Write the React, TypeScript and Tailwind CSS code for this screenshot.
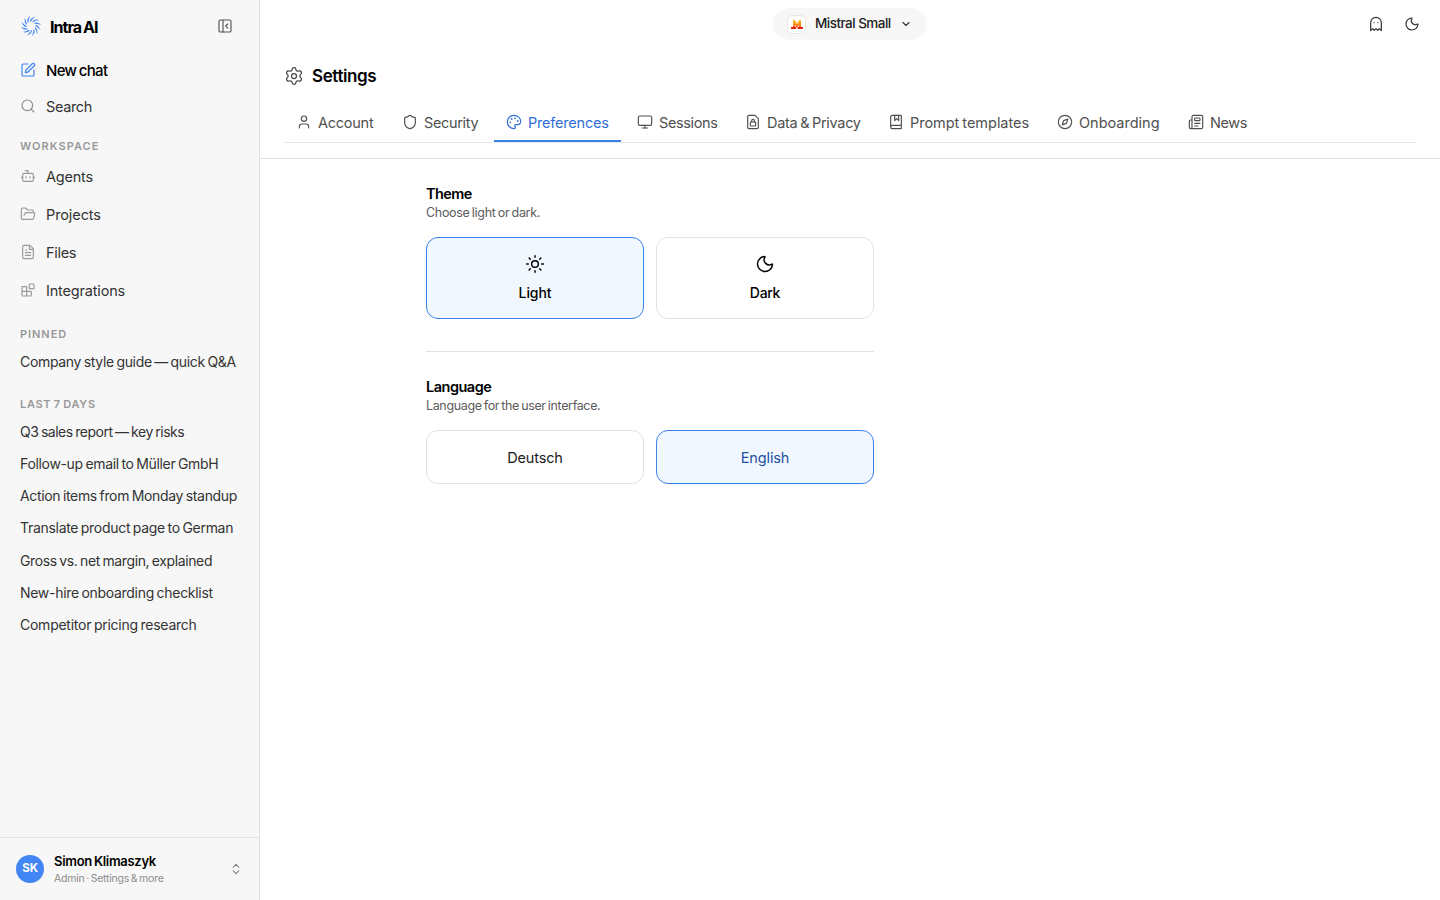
import type { ReactNode } from 'react';
import clsx from 'clsx';
import {
  BookMarked,
  Bot,
  ChevronDown,
  ChevronsUpDown,
  Compass,
  FileText,
  FolderOpen,
  Ghost,
  Monitor,
  Moon,
  Newspaper,
  Palette,
  PanelLeftClose,
  Search,
  Settings,
  Shield,
  SquarePen,
  Sun,
  User,
  type LucideIcon,
} from 'lucide-react';

type IconProps = { className?: string };

function BlocksIcon({ className }: IconProps) {
  return (
    <svg
      width="16"
      height="16"
      viewBox="0 0 24 24"
      fill="none"
      stroke="currentColor"
      strokeWidth="1.75"
      strokeLinecap="round"
      strokeLinejoin="round"
      className={className}
    >
      <rect width="7" height="7" x="14" y="3" rx="1" />
      <path d="M10 21V8a1 1 0 0 0-1-1H4a1 1 0 0 0-1 1v12a1 1 0 0 0 1 1h12a1 1 0 0 0 1-1v-5a1 1 0 0 0-1-1H3" />
    </svg>
  );
}

function FileLockIcon({ className }: IconProps) {
  return (
    <svg
      width="16"
      height="16"
      viewBox="0 0 24 24"
      fill="none"
      stroke="currentColor"
      strokeWidth="1.75"
      strokeLinecap="round"
      strokeLinejoin="round"
      className={className}
    >
      <path d="M15 2H6a2 2 0 0 0-2 2v16a2 2 0 0 0 2 2h12a2 2 0 0 0 2-2V7Z" />
      <rect width="8" height="6" x="8" y="12" rx="1" />
      <path d="M10 12v-2a2 2 0 1 1 4 0v2" />
    </svg>
  );
}

const WORKSPACE: { label: string; icon: LucideIcon | typeof BlocksIcon; className: string }[] = [
  { label: 'Agents', icon: Bot, className: 'tracking-[-0.2px]' },
  { label: 'Projects', icon: FolderOpen, className: 'tracking-[-0.1px]' },
  { label: 'Files', icon: FileText, className: 'tracking-[-0.3px]' },
  { label: 'Integrations', icon: BlocksIcon, className: 'tracking-[-0.18px]' },
];

const RECENT = [
  { label: 'Q3 sales report — key risks', className: 'tracking-[-0.47px]' },
  { label: 'Follow-up email to Müller GmbH', className: 'tracking-[-0.33px]' },
  { label: 'Action items from Monday standup', className: 'tracking-[-0.33px]' },
  { label: 'Translate product page to German', className: 'tracking-[-0.3px]' },
  { label: 'Gross vs. net margin, explained', className: 'tracking-[-0.38px]' },
  { label: 'New-hire onboarding checklist', className: 'tracking-[-0.3px]' },
  { label: 'Competitor pricing research', className: 'tracking-[-0.25px]' },
];

const TABS: { label: string; icon: LucideIcon | typeof FileLockIcon; className: string }[] = [
  { label: 'Account', icon: User, className: 'w-[102px] tracking-[-0.25px]' },
  { label: 'Security', icon: Shield, className: 'w-[100px] tracking-[-0.35px]' },
  { label: 'Preferences', icon: Palette, className: 'w-[127px] tracking-[-0.2px]' },
  { label: 'Sessions', icon: Monitor, className: 'w-[104px] tracking-[-0.38px]' },
  { label: 'Data & Privacy', icon: FileLockIcon, className: 'w-[139px] tracking-[-0.3px]' },
  { label: 'Prompt templates', icon: BookMarked, className: 'w-[165px] tracking-[-0.03px]' },
  { label: 'Onboarding', icon: Compass, className: 'w-[127px]' },
  { label: 'News', icon: Newspaper, className: 'w-[83px] tracking-[-0.4px]' },
];

const RAYS = Array.from({ length: 12 }, (_, i) => i * 30);

function Logo() {
  return (
    <svg width="20" height="20" viewBox="0 0 20 20" fill="none" stroke="#4285f4" strokeLinecap="round">
      {RAYS.map((deg) => (
        <g key={deg} transform={`rotate(${deg} 10 10)`}>
          <path d="M9.6 5.1C9.9 4 10.6 3 11.6 2.4" strokeWidth="1.25" />
          <path d="M12.6 1.6l.5-.3" strokeWidth="1" />
        </g>
      ))}
    </svg>
  );
}

function MistralLogo() {
  return (
    <svg width="12" height="9" viewBox="0 0 12 9">
      <path d="M2 0h2.2v2H2zM7.8 0H10v2H7.8z" fill="#ffb81c" />
      <path d="M2 1.8h3.4v2H2zM6.6 1.8H10v2H6.6z" fill="#ffa012" />
      <path d="M2 3.6h8v1.9H2z" fill="#ff8205" />
      <path d="M2 5.4h2.2v1.8H2zM5 5.4h2v1.8H5zM7.8 5.4H10v1.8H7.8z" fill="#fa500f" />
      <path d="M0 7.1h5.2V9H0zM6.8 7.1H12V9H6.8z" fill="#e3260b" />
    </svg>
  );
}

function SectionLabel({ children, className }: { children: ReactNode; className?: string }) {
  return (
    <div className={clsx('px-5 text-[11px] leading-4 font-semibold text-[#999]', className)}>
      {children}
    </div>
  );
}

function Sidebar() {
  return (
    <aside className="flex w-[260px] shrink-0 flex-col border-r border-[#e2e2e2] bg-[#f7f7f7]">
      <div className="flex h-[52px] items-center pr-[26px] pl-[21px]">
        <Logo />
        <span className="ml-[9px] pt-px text-base font-bold tracking-[-0.95px] text-black">Intra AI</span>
        <PanelLeftClose size={16} strokeWidth={1.75} className="ml-auto text-[#555]" />
      </div>

      <nav className="flex flex-col">
        <a className="flex h-9 items-center gap-2.5 px-5 text-[15px] font-medium tracking-[-0.65px] text-black">
          <SquarePen size={16} strokeWidth={1.75} className="text-[#3b82f6]" />
          <span className="pt-0.5">New chat</span>
        </a>
        <a className="flex h-9 items-center gap-2.5 px-5 text-[14.5px] tracking-[-0.35px] text-[#333]">
          <Search size={16} strokeWidth={1.75} className="text-[#8c8c8c]" />
          <span className="pt-0.5">Search</span>
        </a>

        <SectionLabel className="mt-[14px] mb-[3px] tracking-[1.05px]">WORKSPACE</SectionLabel>
        {WORKSPACE.map(({ label, icon: Icon, className }) => (
          <a key={label} className={clsx('flex h-[38px] items-center gap-2.5 px-5 text-[14.5px] text-[#333]', className)}>
            <Icon size={16} strokeWidth={1.75} className="text-[#999]" />
            <span className="pt-0.5">{label}</span>
          </a>
        ))}

        <SectionLabel className="mt-[16.7px] mb-1 tracking-[0.95px]">PINNED</SectionLabel>
        <a className="flex h-8 items-center px-5 text-sm tracking-[-0.33px] whitespace-nowrap text-[#333]">
          Company style guide — quick Q&amp;A
        </a>

        <SectionLabel className="mt-[18px] mb-1 tracking-[0.7px]">LAST 7 DAYS</SectionLabel>
        {RECENT.map(({ label, className }) => (
          <a key={label} className={clsx('flex h-[32.2px] items-center px-5 text-sm whitespace-nowrap text-[#333]', className)}>
            {label}
          </a>
        ))}
      </nav>

      <div className="mt-auto flex h-[63px] items-center border-t border-[#e2e2e2] px-4">
        <div className="flex size-7 items-center justify-center rounded-full bg-[#4285f4] text-[11.5px] font-bold tracking-[-0.2px] text-white">
          SK
        </div>
        <div className="ml-2.5">
          <div className="text-[13px] leading-[18px] font-semibold tracking-[-0.3px] text-black">Simon Klimaszyk</div>
          <div className="pt-px text-[10.5px] leading-4 tracking-[-0.23px] text-[#8c8c8c]">Admin · Settings &amp; more</div>
        </div>
        <ChevronsUpDown size={14} strokeWidth={1.75} className="ml-auto text-[#777]" />
      </div>
    </aside>
  );
}

function Option({ active, className, children }: { active?: boolean; className?: string; children: ReactNode }) {
  return (
    <button
      className={clsx(
        'flex w-[218px] flex-col items-center justify-center rounded-xl border',
        active ? 'border-[#3b82e6] bg-[#f1f7ff]' : 'border-[#e2e2e2] bg-white',
        className,
      )}
    >
      {children}
    </button>
  );
}

export default function App() {
  return (
    <div className="flex h-screen w-full overflow-hidden bg-white font-['Inter','Liberation_Sans',sans-serif] [word-spacing:-1px]">
      <Sidebar />

      <main className="flex min-w-0 flex-1 flex-col">
        <header className="flex h-12 items-center">
          <div className="w-[513px]" />
          <button className="flex h-8 w-[154px] items-center rounded-full bg-[#f7f7f7] pl-[14px]">
            <span className="flex size-[19px] items-center justify-center rounded-[5px] border border-[#e8e8e8] bg-white">
              <MistralLogo />
            </span>
            <span className="ml-[9px] pb-px text-[13.5px] font-medium tracking-[-0.53px] whitespace-nowrap text-[#222]">
              Mistral Small
            </span>
            <ChevronDown size={12} strokeWidth={2.25} className="ml-[9px] text-[#333]" />
          </button>
          <div className="ml-auto flex gap-5 pr-5 text-[#333]">
            <Ghost size={16} strokeWidth={1.75} />
            <Moon size={16} strokeWidth={1.75} />
          </div>
        </header>

        <div className="border-b border-[#e2e2e2] px-6 pb-[15px]">
          <h1 className="flex h-14 items-center gap-2 text-[17px] font-semibold tracking-[-0.4px] text-black">
            <Settings size={20} strokeWidth={1.5} className="text-[#444]" />
            <span className="pt-px">Settings</span>
          </h1>
          <div className="flex h-[39px] gap-1 border-b border-[#e6e6e6]">
            {TABS.map(({ label, icon: Icon, className }) => (
              <a
                key={label}
                className={clsx(
                  'flex h-[38px] shrink-0 items-center gap-1.5 border-b-2 px-3 text-[14.5px] whitespace-nowrap',
                  className,
                  label === 'Preferences' ? 'border-[#3b82e6] text-[#2f6fd6]' : 'border-transparent text-[#505050]',
                )}
              >
                <Icon size={16} strokeWidth={1.75} className="shrink-0" />
                <span className="pt-0.5">{label}</span>
              </a>
            ))}
          </div>
        </div>

        <div className="ml-[166px] w-[448px] pt-[26px]">
          <h2 className="text-[14.5px] leading-[18px] font-semibold tracking-[-0.6px] text-black">Theme</h2>
          <p className="pt-px text-[12.5px] leading-[18px] tracking-[-0.3px] text-[#5c5c5c]">Choose light or dark.</p>
          <div className="mt-[15px] flex gap-3 text-sm font-medium text-black">
            <Option active className="h-[82px] gap-[9px]">
              <Sun size={20} strokeWidth={1.75} />
              <span className="tracking-[-0.1px]">Light</span>
            </Option>
            <Option className="h-[82px] gap-[9px]">
              <Moon size={20} strokeWidth={1.75} />
              <span className="tracking-[-0.3px]">Dark</span>
            </Option>
          </div>

          <div className="mt-8 mb-[26px] h-px bg-[#e2e2e2]" />

          <h2 className="text-[14.5px] leading-[18px] font-semibold tracking-[-0.5px] text-black">Language</h2>
          <p className="pt-px text-[12.5px] leading-[18px] tracking-[-0.36px] text-[#5c5c5c]">
            Language for the user interface.
          </p>
          <div className="mt-[15px] flex gap-3 text-[14.5px] tracking-[-0.15px]">
            <Option className="h-[54px] pt-0.5 text-[#1a1a1a]">Deutsch</Option>
            <Option active className="h-[54px] pt-0.5 text-[#1f4fa0]">
              English
            </Option>
          </div>
        </div>
      </main>
    </div>
  );
}
